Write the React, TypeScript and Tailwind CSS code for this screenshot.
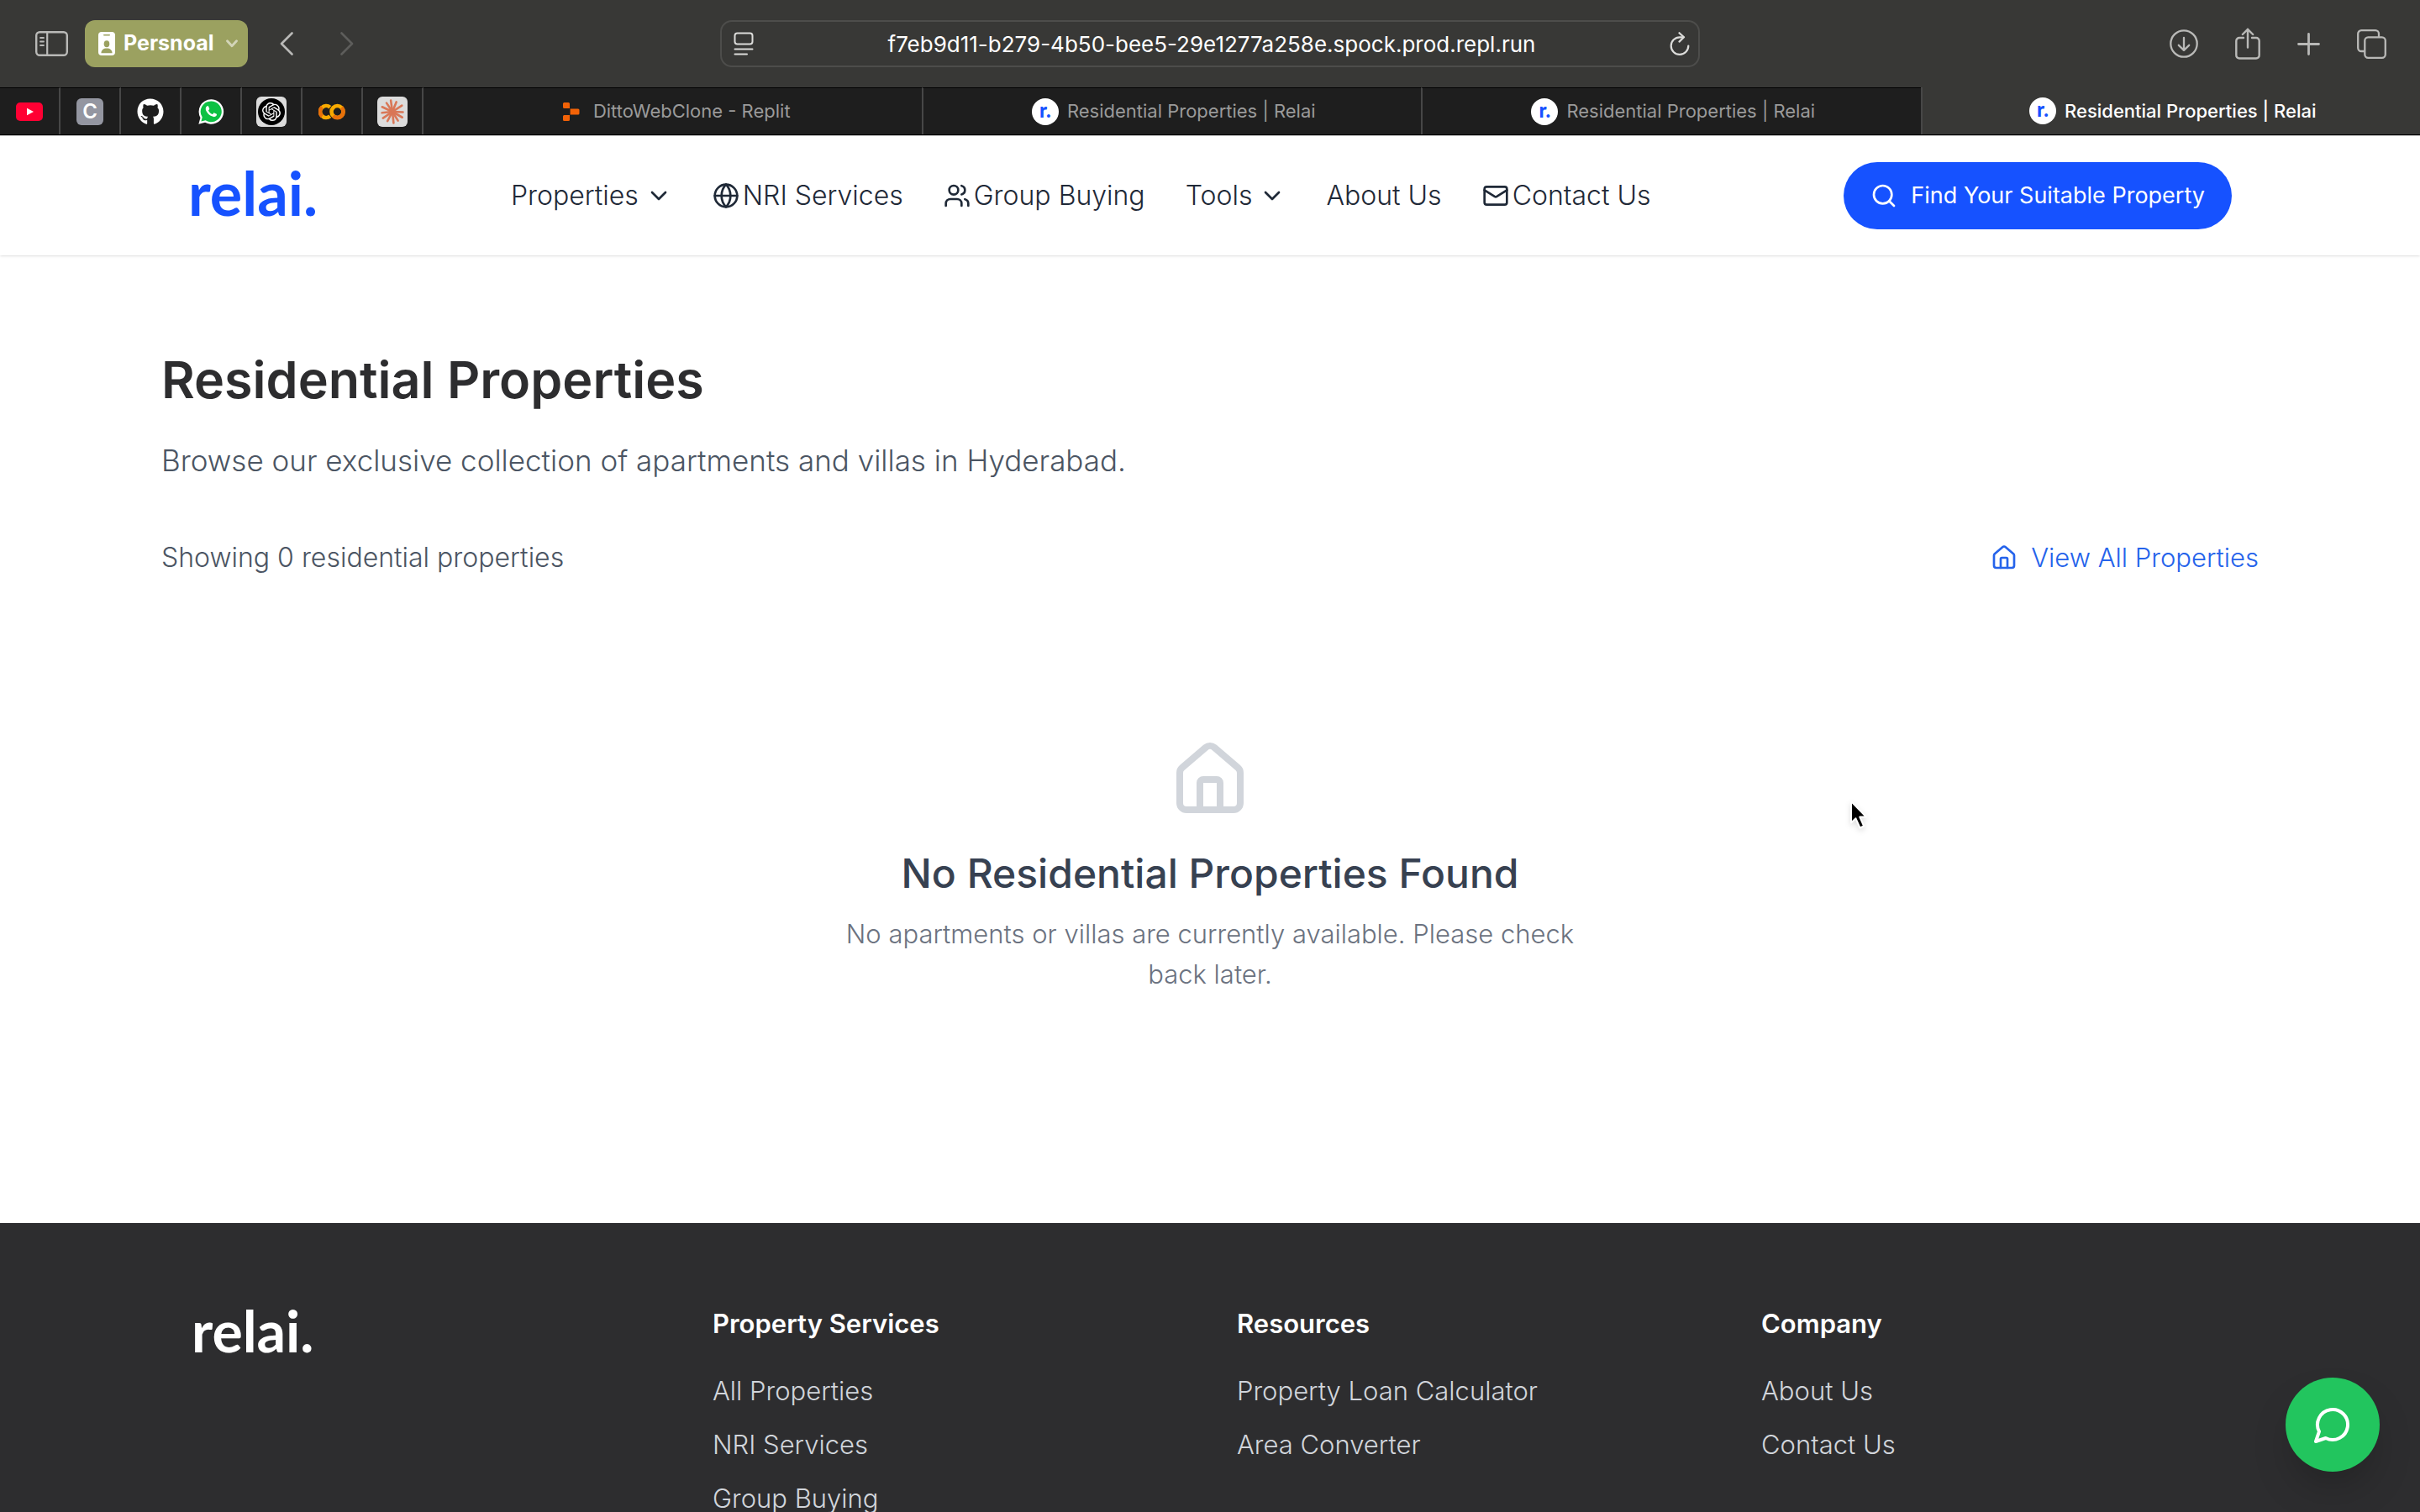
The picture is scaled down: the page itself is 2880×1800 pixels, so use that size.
import type { ReactNode } from "react";
import { ChevronDown, Globe, House, Mail, Search, Users } from "lucide-react";
import { FaGithub } from "react-icons/fa6";
import { SiOpenai } from "react-icons/si";

function SidebarIcon() {
  return (
    <svg className="h-[30px] w-[39px]" viewBox="0 0 39 30" fill="none" stroke="currentColor" strokeLinecap="round">
      <rect x="1.2" y="1.2" width="36.6" height="27.6" rx="4" strokeWidth="2.4" />
      <path d="M14.2 1.5v27" strokeWidth="2.2" />
      <path d="M6 8h4M6 12.5h4M6 17h4" strokeWidth="1.8" />
    </svg>
  );
}

function BadgeIcon() {
  return (
    <svg className="h-7 w-5" viewBox="0 0 20 28">
      <rect width="20" height="28" rx="4" fill="#fff" />
      <rect x="6" y="3" width="8" height="1.6" rx=".8" fill="#9ba160" />
      <ellipse cx="10" cy="14.2" rx="3.3" ry="4" fill="#9ba160" />
      <path d="M3.4 25.2c.2-3.6 2.8-5.6 6.6-5.6s6.4 2 6.6 5.6z" fill="#9ba160" />
    </svg>
  );
}

function NavChevron({ forward = false }: { forward?: boolean }) {
  return (
    <svg className="h-7 w-4" viewBox="0 0 16 28" fill="none" stroke="currentColor" strokeWidth="2.6" strokeLinecap="round" strokeLinejoin="round">
      <path d={forward ? "M1.5 1.5 14 14 1.5 26.5" : "M14.5 1.5 2 14l12.5 12.5"} />
    </svg>
  );
}

function PageMenuIcon() {
  return (
    <svg className="h-[28px] w-6" viewBox="0 0 24 28" fill="none" stroke="currentColor" strokeWidth="2" strokeLinecap="round">
      <rect x="1.5" y="1.5" width="21" height="13" rx="3" />
      <path d="M1.5 20.5h21M1.5 26.5h14.5" />
    </svg>
  );
}

function ReloadIcon() {
  return (
    <svg className="h-[28px] w-6" viewBox="0 0 24 28" fill="none" stroke="currentColor" strokeWidth="2.2" strokeLinecap="round" strokeLinejoin="round">
      <path d="M16.5 6.3H12A10.3 10.3 0 1 0 22.3 16.5" />
      <path d="M11.5 1.2 17 6.3l-5.5 5.3" />
    </svg>
  );
}

function DownloadIcon() {
  return (
    <svg className="h-[34px] w-[34px]" viewBox="0 0 34 34" fill="none" stroke="currentColor" strokeWidth="2.3" strokeLinecap="round" strokeLinejoin="round">
      <circle cx="17" cy="17" r="15.7" />
      <path d="M17 10v14.5M10.8 18.8l6.2 6 6.2-6" />
    </svg>
  );
}

function ShareIcon() {
  return (
    <svg className="h-[38px] w-[30px]" viewBox="0 0 30 38" fill="none" stroke="currentColor" strokeWidth="2.4" strokeLinecap="round" strokeLinejoin="round">
      <path d="M10 12H5a3.7 3.7 0 0 0-3.7 3.7v17A3.7 3.7 0 0 0 5 36.5h20a3.7 3.7 0 0 0 3.7-3.8v-17A3.7 3.7 0 0 0 25 12h-5" />
      <path d="M15 23.5V1.8M8.8 8 15 1.8 21.2 8" />
    </svg>
  );
}

function PlusIcon() {
  return (
    <svg className="h-[27px] w-[27px]" viewBox="0 0 27 27" fill="none" stroke="currentColor" strokeWidth="2.8" strokeLinecap="round">
      <path d="M13.5 1.5v24M1.5 13.5h24" />
    </svg>
  );
}

function TabsIcon() {
  return (
    <svg className="h-[35px] w-[35px]" viewBox="0 0 35 35" fill="none" stroke="currentColor" strokeWidth="2.3">
      <rect x="9.3" y="9.3" width="24.5" height="24.5" rx="4" />
      <path d="M9 26H5.2a4 4 0 0 1-4-4V5.2a4 4 0 0 1 4-4H22a4 4 0 0 1 4 4V9" />
    </svg>
  );
}

function WhatsAppIcon() {
  return (
    <svg className="h-8 w-8" viewBox="0 0 24 24">
      <path d="M12.2 1a11 11 0 0 0-9.6 16.4L1 23l5.8-1.5A11 11 0 1 0 12.2 1z" fill="#fff" />
      <path d="M12.2 2.6a9.3 9.3 0 0 0-7.9 14.3L3.3 20.7l3.9-1A9.3 9.3 0 1 0 12.2 2.6z" fill="#0dc143" />
      <path
        fill="#fff"
        d="M16.75 13.96C17 14.09 17.16 14.16 17.21 14.26C17.27 14.37 17.25 14.87 17 15.44C16.8 16 15.76 16.54 15.3 16.56C14.84 16.58 14.83 16.92 12.34 15.83C9.85 14.74 8.35 12.08 8.23 11.91C8.11 11.74 7.27 10.53 7.31 9.3C7.36 8.08 8 7.5 8.26 7.26C8.5 7 8.77 6.97 8.94 7H9.41C9.56 7 9.77 6.94 9.96 7.45L10.65 9.32C10.71 9.45 10.75 9.6 10.66 9.76L10.39 10.17L10 10.59C9.88 10.71 9.74 10.84 9.88 11.09C10 11.35 10.5 12.18 11.2 12.87C12.11 13.75 12.91 14.04 13.15 14.17C13.39 14.31 13.54 14.29 13.69 14.13L14.5 13.19C14.69 12.94 14.85 13 15.08 13.08L16.75 13.96Z"
      />
    </svg>
  );
}

function ColabIcon() {
  return (
    <svg className="h-5 w-8" viewBox="0 0 32 20" fill="none" strokeWidth="4.6">
      <path d="M13.8 4.7A7 7 0 1 0 13.8 15.3" stroke="#f9ab00" />
      <path d="M4.4 4.6A7 7 0 0 0 4.4 15.4" stroke="#e8710a" />
      <circle cx="22.5" cy="10" r="7" stroke="#f9ab00" />
      <path d="M27.5 5A7 7 0 0 1 17.5 15" stroke="#e8710a" />
    </svg>
  );
}

const rays = [2, 30, 58, 84, 118, 146, 174, 205, 236, 262, 292, 327];

function ClaudeIcon() {
  return (
    <span className="flex h-9 w-9 items-center justify-center rounded-md bg-[#dcdcdc]">
      <svg className="h-8 w-8" viewBox="-16 -16 32 32" stroke="#d97757" strokeWidth="2.6" strokeLinecap="round">
        {rays.map((a, i) => (
          <path key={a} d={i % 2 ? "M0 0h13.5" : "M0 0h12.5"} transform={`rotate(${a})`} />
        ))}
      </svg>
    </span>
  );
}

function ReplitIcon() {
  return (
    <svg className="h-8 w-8" viewBox="0 0 32 32" fill="#f26207">
      <path d="M7.5 5h5A1.5 1.5 0 0 1 14 6.5V12H7.5A1.5 1.5 0 0 1 6 10.5v-4A1.5 1.5 0 0 1 7.5 5zM14.6 12.4h9.4a1.5 1.5 0 0 1 1.5 1.5v4.2a1.5 1.5 0 0 1-1.5 1.5h-9.4zM7.5 20H14v5.5a1.5 1.5 0 0 1-1.5 1.5h-5A1.5 1.5 0 0 1 6 25.5v-4A1.5 1.5 0 0 1 7.5 20z" />
    </svg>
  );
}

function RelaiFavicon() {
  return (
    <span className="flex h-8 w-8 items-center justify-center rounded-full bg-white pb-1 font-[Lato] text-2xl leading-none font-black text-[#1652ff]">
      r.
    </span>
  );
}

const pinned: { name: string; icon: ReactNode }[] = [
  {
    name: "YouTube",
    icon: (
      <svg className="h-[22px] w-8" viewBox="0 0 32 22">
        <rect width="32" height="22" rx="5" fill="#ff0033" />
        <path d="M13 6.8 21 11l-8 4.2z" fill="#fff" />
      </svg>
    ),
  },
  {
    name: "C",
    icon: (
      <span className="flex h-8 w-8 items-center justify-center rounded-md bg-[#9496a1] text-2xl leading-none font-semibold text-white">C</span>
    ),
  },
  { name: "GitHub", icon: <FaGithub className="h-8 w-8 text-white" /> },
  { name: "WhatsApp", icon: <WhatsAppIcon /> },
  {
    name: "ChatGPT",
    icon: (
      <span className="flex h-9 w-9 items-center justify-center rounded-md bg-[#dcdcdc]">
        <span className="flex h-8 w-8 items-center justify-center rounded-full bg-black">
          <SiOpenai className="h-[22px] w-[22px] text-white" />
        </span>
      </span>
    ),
  },
  { name: "Colab", icon: <ColabIcon /> },
  { name: "Claude", icon: <ClaudeIcon /> },
];

const tabs = [
  { title: "DittoWebClone - Replit", replit: true, active: false },
  { title: "Residential Properties | Relai", replit: false, active: false },
  { title: "Residential Properties | Relai", replit: false, active: false },
  { title: "Residential Properties | Relai", replit: false, active: true },
];

function BrowserChrome() {
  return (
    <div className="shrink-0 bg-[#383836] font-[Inter,sans-serif]">
      <div className="grid h-26 grid-cols-[1fr_minmax(0,1166px)_1fr] items-center text-[#b9b9b7]">
        <div className="flex items-center pl-[42px]">
          <button aria-label="Show sidebar"><SidebarIcon /></button>
          <button className="ml-5 flex h-14 items-center rounded-xl bg-[#9ba160] pr-3 pl-4 text-[25px] font-bold text-white">
            <BadgeIcon />
            <span className="mr-[14px] ml-[10px]">Persnoal</span>
            <svg className="h-[10px] w-[14px]" viewBox="0 0 14 10" fill="none" stroke="#d3d5b8" strokeWidth="2.8" strokeLinecap="round" strokeLinejoin="round">
              <path d="m1.5 1.8 5.5 6 5.5-6" />
            </svg>
          </button>
          <button aria-label="Back" className="ml-[38px]"><NavChevron /></button>
          <button aria-label="Forward" className="ml-14 text-[#5d5d5b]"><NavChevron forward /></button>
        </div>
        <div className="flex h-14 items-center rounded-[14px] border-2 border-[#4d4d4b] pr-[10px] pl-[14px] text-[#dcdcda]">
          <button aria-label="Page menu"><PageMenuIcon /></button>
          <input
            aria-label="Address"
            className="min-w-0 flex-1 bg-transparent text-center text-[26px] text-white outline-none"
            defaultValue="f7eb9d11-b279-4b50-bee5-29e1277a258e.spock.prod.repl.run"
          />
          <button aria-label="Reload"><ReloadIcon /></button>
        </div>
        <div className="flex items-center justify-end gap-11 pr-10">
          <button aria-label="Downloads"><DownloadIcon /></button>
          <button aria-label="Share"><ShareIcon /></button>
          <button aria-label="New tab"><PlusIcon /></button>
          <button aria-label="Tab overview"><TabsIcon /></button>
        </div>
      </div>
      <div className="flex h-[57px] border-b border-black">
        {pinned.map((p) => (
          <button key={p.name} aria-label={p.name} className="flex w-18 items-center justify-center border-t border-r-2 border-t-black border-r-[#474747] bg-[#1e1e1e]">
            {p.icon}
          </button>
        ))}
        {tabs.map((t, i) => (
          <button
            key={i}
            className={
              t.active
                ? "flex flex-1 items-center justify-center gap-[10px] border-l-2 border-[#474747] pl-1 text-[22px] font-medium text-white"
                : i === 0
                  ? "flex flex-1 items-center justify-center gap-[10px] border-t border-t-black bg-[#1e1e1e] pl-1 text-[22px] text-[#9a9a9a]"
                  : "flex flex-1 items-center justify-center gap-[10px] border-t border-l-2 border-t-black border-l-[#474747] bg-[#1e1e1e] pl-1 text-[22px] text-[#9a9a9a]"
            }
          >
            {t.replit ? <ReplitIcon /> : <RelaiFavicon />}
            {t.title}
          </button>
        ))}
      </div>
    </div>
  );
}

function SiteHeader() {
  return (
    <header className="relative flex h-[143px] items-center justify-between border-t border-[#c4c4c4] bg-white px-56 shadow-sm">
      <a href="#home" className="mb-2 font-[Lato] text-[72px] leading-none font-bold text-[#1652ff]">relai.</a>
      <nav className="flex items-center gap-12 text-[32px] font-[350] text-[#1f2937]">
        <button className="flex items-center gap-2">Properties<ChevronDown className="h-8 w-8" /></button>
        <a href="#nri" className="flex items-center gap-1"><Globe className="h-8 w-8" />NRI Services</a>
        <a href="#group" className="flex items-center gap-1"><Users className="h-8 w-8" />Group Buying</a>
        <button className="flex items-center gap-2">Tools<ChevronDown className="h-8 w-8" /></button>
        <a href="#about">About Us</a>
        <a href="#contact" className="flex items-center gap-1"><Mail className="h-8 w-8" />Contact Us</a>
      </nav>
      <button className="flex h-20 items-center gap-4 rounded-full bg-[#1652ff] px-8 text-[27px] text-white">
        <Search className="h-8 w-8" />
        Find Your Suitable Property
      </button>
    </header>
  );
}

const footerColumns = [
  { heading: "Property Services", links: ["All Properties", "NRI Services", "Group Buying"] },
  { heading: "Resources", links: ["Property Loan Calculator", "Area Converter"] },
  { heading: "Company", links: ["About Us", "Contact Us"] },
];

export default function App() {
  return (
    <div className="relative flex h-screen flex-col overflow-hidden bg-white font-[Inter,sans-serif]">
      <BrowserChrome />
      <div className="min-h-0 flex-1 overflow-hidden">
        <SiteHeader />
        <main className="px-48 pt-28 pb-68">
          <h1 className="text-[61px] leading-[72px] font-semibold text-[#2d2d2f]">Residential Properties</h1>
          <p className="mt-8 text-[35px] leading-[56px] font-[350] text-[#4b5563]">
            Browse our exclusive collection of apartments and villas in Hyderabad.
          </p>
          <div className="mt-16 flex items-center justify-between leading-[48px] font-[350]">
            <p className="text-[32px] text-[#4b5563]">Showing 0 residential properties</p>
            <a href="#all" className="flex items-center gap-4 text-[31px] text-[#2563eb]">
              <House className="h-8 w-8" />
              View All Properties
            </a>
          </div>
          <section className="mt-48 flex flex-col items-center text-center">
            <House className="h-24 w-24" color="#d1d5db" />
            <h2 className="mt-8 text-[48px] leading-[64px] font-medium text-[#374151]">No Residential Properties Found</h2>
            <p className="mt-4 max-w-[896px] text-[31px] leading-[48px] font-[350] text-[#6b7280]">
              No apartments or villas are currently available. Please check back later.
            </p>
          </section>
        </main>
        <footer className="grid grid-cols-4 gap-16 bg-[#2d2d2f] px-56 pt-24 pb-24 text-[31px] leading-[48px] font-[350]">
          <a href="#home" className="pl-1 font-[Lato] text-[68px] leading-[64px] font-bold text-white">relai.</a>
          {footerColumns.map((c) => (
            <div key={c.heading}>
              <h3 className="font-semibold text-white">{c.heading}</h3>
              <ul className="mt-8 space-y-4 text-[#d1d5db]">
                {c.links.map((l) => (
                  <li key={l}><a href="#link">{l}</a></li>
                ))}
              </ul>
            </div>
          ))}
        </footer>
      </div>
      <button aria-label="Chat" className="absolute right-12 bottom-12 flex h-28 w-28 items-center justify-center rounded-full bg-[#22c55e] text-white shadow-2xl">
        <svg className="h-12 w-12" viewBox="0 0 24 24" fill="none" stroke="currentColor" strokeWidth="2" strokeLinecap="round" strokeLinejoin="round">
          <path d="M7.9 20A9 9 0 1 0 4 16.1L2 22Z" />
        </svg>
      </button>
      <svg className="absolute top-[950px] left-[2200px] h-10 w-7 drop-shadow-md" viewBox="0 0 28 40">
        <path d="M3 4v25.5l5.5-5.2 5 11.2 4.7-2-4.9-10.9h7.7z" fill="#000" stroke="#fff" strokeWidth="2" strokeLinejoin="round" />
      </svg>
    </div>
  );
}
